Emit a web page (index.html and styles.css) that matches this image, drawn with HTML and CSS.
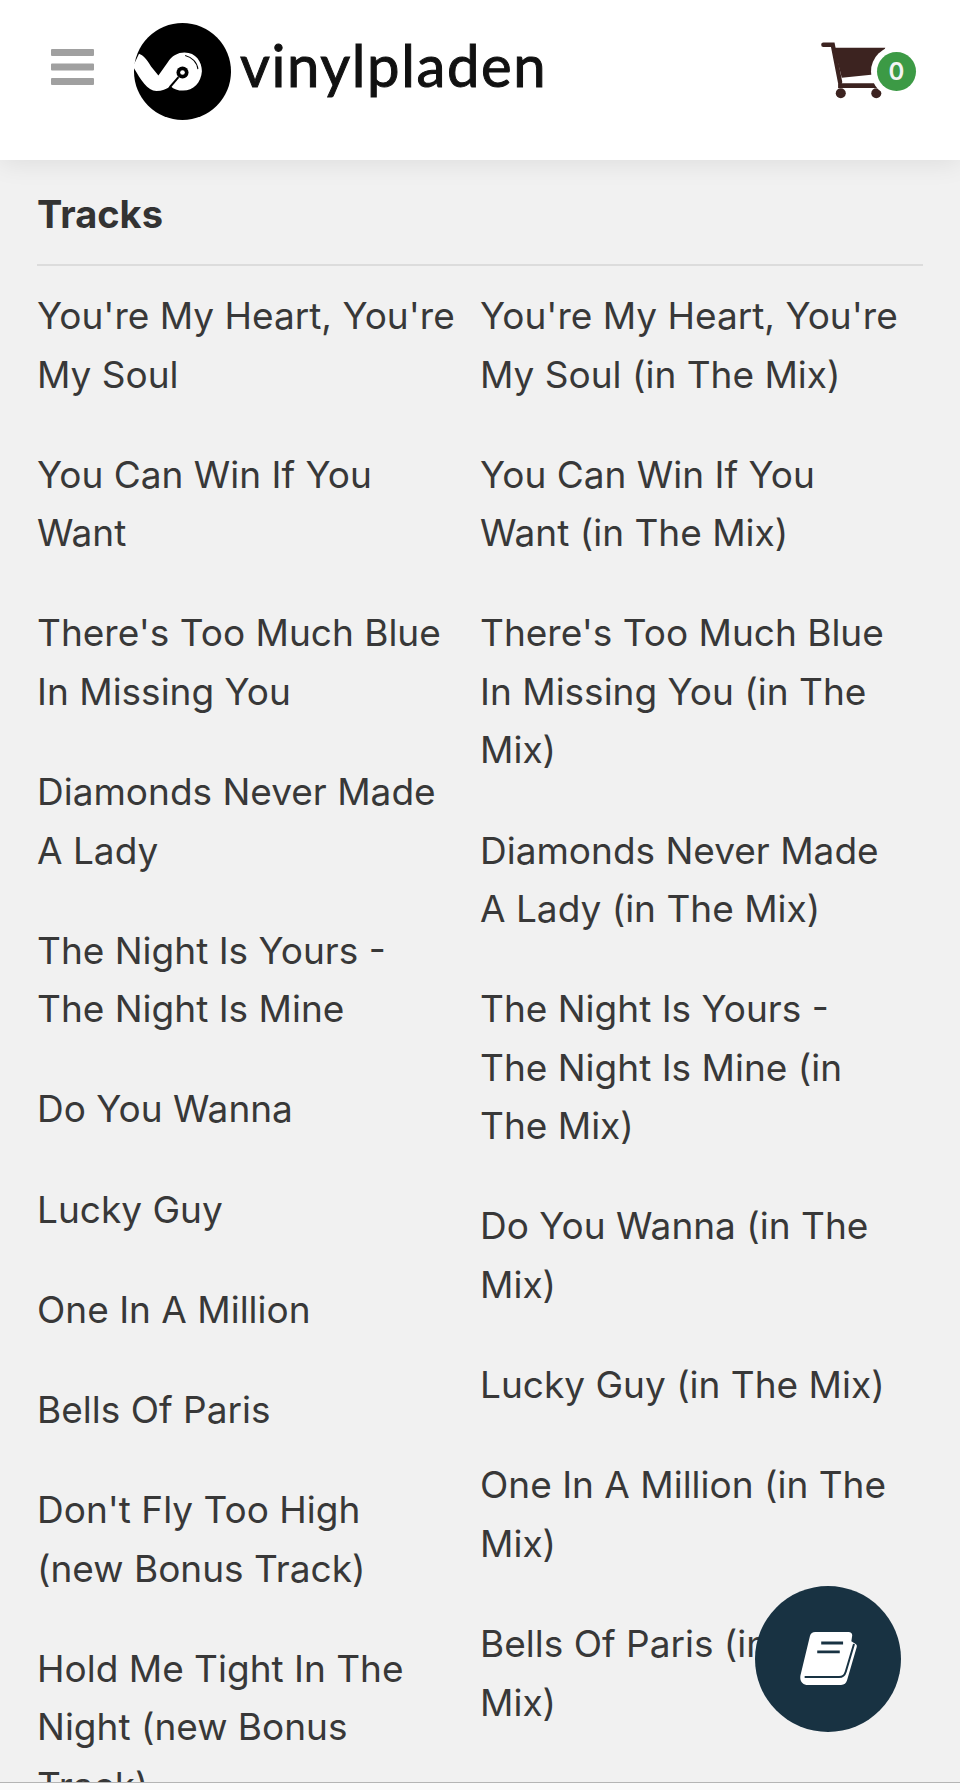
FILE: index.html
```html
<html><head><title>Vinylpladen - Tracks</title>
<link rel="stylesheet" href="styles.css">
</head>
<body>
<div id="page">
  <header id="top-bar">
    <svg class="menu-icon" viewBox="0 0 43 36"><path d="M1 0h41a1 1 0 0 1 1 1v5a1 1 0 0 1-1 1H1a1 1 0 0 1-1-1V1a1 1 0 0 1 1-1zm0 14.500h41a1 1 0 0 1 1 1v5a1 1 0 0 1-1 1H1a1 1 0 0 1-1-1v-5a1 1 0 0 1 1-1zM1 29h41a1 1 0 0 1 1 1v5a1 1 0 0 1-1 1H1a1 1 0 0 1-1-1v-5a1 1 0 0 1 1-1z"/></svg>
    <div class="logo">
      <svg class="logo-disc" viewBox="45 40 290 290">
        <ellipse cx="190" cy="185" rx="145" ry="145" fill="#000"/>
        <path fill="#fff" d="M42 170 L60 132 C72 136 84 150 96 170 L118 197 L146 157 C158 138 176 128 196 128 C230 128 248 156 248 184 C246 218 222 242 192 242 C176 242 164 238 154 228 C142 238 128 243 112 243 C84 243 62 204 42 170Z"/>
        <path fill="none" stroke="#000" stroke-width="6" d="M178 202 L152 232"/>
        <circle cx="190" cy="188" r="18" fill="#000"/>
        <circle cx="190" cy="188" r="7" fill="#fff"/>
        <path fill="none" stroke="#000" stroke-width="3" d="M198 137 C218 142 234 158 236 178"/>
      </svg>
      <span class="logo-text">vinylpladen</span>
    </div>
    <div class="cart">
      <svg class="cart-icon" viewBox="180 125 200 170">
        <path fill="#3c2320" d="M222 142H375L340 222 245 232Z"/>
        <path fill="none" stroke="#3c2320" stroke-width="13" stroke-linecap="round" d="M190 133H218L240 245"/>
        <path fill="none" stroke="#3c2320" stroke-width="14" d="M234 255H350"/>
        <circle cx="242" cy="278" r="15" fill="#3c2320"/>
        <circle cx="348" cy="278" r="15" fill="#3c2320"/>
      </svg>
      <span class="cart-count">0</span>
    </div>
  </header>
  <main id="content">
    <h3 class="section-title">Tracks</h3>
    <div class="track-columns">
      <ul class="track-list">
        <li>You're My Heart, You're My Soul</li>
        <li>You Can Win If You Want</li>
        <li>There's Too Much Blue In Missing You</li>
        <li>Diamonds Never Made A Lady</li>
        <li>The Night Is Yours - The Night Is Mine</li>
        <li>Do You Wanna</li>
        <li>Lucky Guy</li>
        <li>One In A Million</li>
        <li>Bells Of Paris</li>
        <li>Don't Fly Too High (new Bonus Track)</li>
        <li>Hold Me Tight In The Night (new Bonus Track)</li>
      </ul>
      <ul class="track-list">
        <li>You're My Heart, You're My Soul (in The Mix)</li>
        <li>You Can Win If You Want (in The Mix)</li>
        <li>There's Too Much Blue In Missing You (in The Mix)</li>
        <li>Diamonds Never Made A Lady (in The Mix)</li>
        <li>The Night Is Yours - The Night Is Mine (in The Mix)</li>
        <li>Do You Wanna (in The Mix)</li>
        <li>Lucky Guy (in The Mix)</li>
        <li>One In A Million (in The Mix)</li>
        <li>Bells Of Paris (in The Mix)</li>
      </ul>
    </div>
  </main>
  <div id="bottom-strip"></div>
  <button class="fab">
    <svg class="book-icon" viewBox="0 0 172 160">
      <path fill="#fff" d="M46 0H146C156 0 159 6 157 14L155 28 168 36C172 39 172 42 171 46L142 146C139 155 134 160 124 160H24C8 160 -3 148 2 128L30 12C32 4 38 0 46 0Z"/>
      <path fill="none" stroke="#183242" stroke-width="6" d="M14 136H118C130 136 135 130 138 120L163 36"/>
      <path fill="none" stroke="#183242" stroke-width="9" d="M64 33H130M52 60H120"/>
    </svg>
  </button>
</div>
</body>
</html>
```

FILE: styles.css
```css
body, html {
  margin: 0;
  padding: 0;
  height: 100%;
  overflow: hidden;
  font-family: Inter, 'Noto Sans', sans-serif;
  background-color: #f1f1f1;
  color: #383838;
}
#page {
  position: relative;
  display: flex;
  flex-direction: column;
  height: 1790px;
}
#top-bar {
  position: relative;
  z-index: 1;
  flex: none;
  height: 160px;
  display: flex;
  align-items: center;
  padding: 0 73px 0 51px;
  box-sizing: border-box;
  background-color: #fff;
  box-shadow: 0 4px 24px rgba(0, 0, 0, 0.08);
}
.menu-icon {
  width: 43px;
  height: 36px;
  margin: -26px 0 0 0;
  fill: #a0a0a0;
}
.logo {
  display: flex;
  align-items: center;
  margin: -17px 0 0 40px;
  flex: 1;
}
.logo-disc {
  width: 97px;
  height: 97px;
}
.logo-text {
  margin: -14px 0 0 9px;
  font-family: Lato, sans-serif;
  font-size: 58px;
  letter-spacing: 1.6px;
  line-height: 1;
  color: #111;
  -webkit-text-stroke: 1px #111;
}
.cart {
  position: relative;
  width: 67px;
  height: 57px;
  margin-top: -20px;
}
.cart-icon {
  display: block;
  width: 67px;
  height: 57px;
}
.cart-count {
  position: absolute;
  left: 57px;
  top: 10px;
  width: 39px;
  height: 39px;
  border-radius: 50%;
  background-color: #3c9a45;
  box-shadow: 0 0 0 6px #fff;
  color: #f4f4f4;
  font-size: 24px;
  font-weight: 600;
  line-height: 39px;
  text-align: center;
}
#content {
  flex: 1;
  min-height: 0;
  overflow: hidden;
  padding: 0 37px;
}
.section-title {
  margin: 0;
  padding: 32px 0 27px;
  font-size: 38px;
  line-height: 45px;
  font-weight: 700;
  color: #333;
  border-bottom: 2px solid #dcdcdc;
}
.track-columns {
  display: grid;
  grid-template-columns: 443px 1fr;
}
.track-list {
  list-style: none;
  margin: 0;
  padding: 21px 0 0 0;
}
.track-list li {
  width: 418px;
  margin-bottom: 41.700px;
  font-size: 37px;
  line-height: 58.500px;
}
#bottom-strip {
  flex: none;
  height: 7px;
  background-color: #fafafa;
  border-top: 1px solid #b5b5b5;
}
.fab {
  position: absolute;
  left: 755px;
  top: 1586px;
  width: 146px;
  height: 146px;
  padding: 0;
  border: none;
  border-radius: 50%;
  background-color: #183242;
  display: flex;
  align-items: center;
  justify-content: center;
}
.book-icon {
  width: 57px;
  height: 53px;
  margin: -1px 0 0 0;
}
```
